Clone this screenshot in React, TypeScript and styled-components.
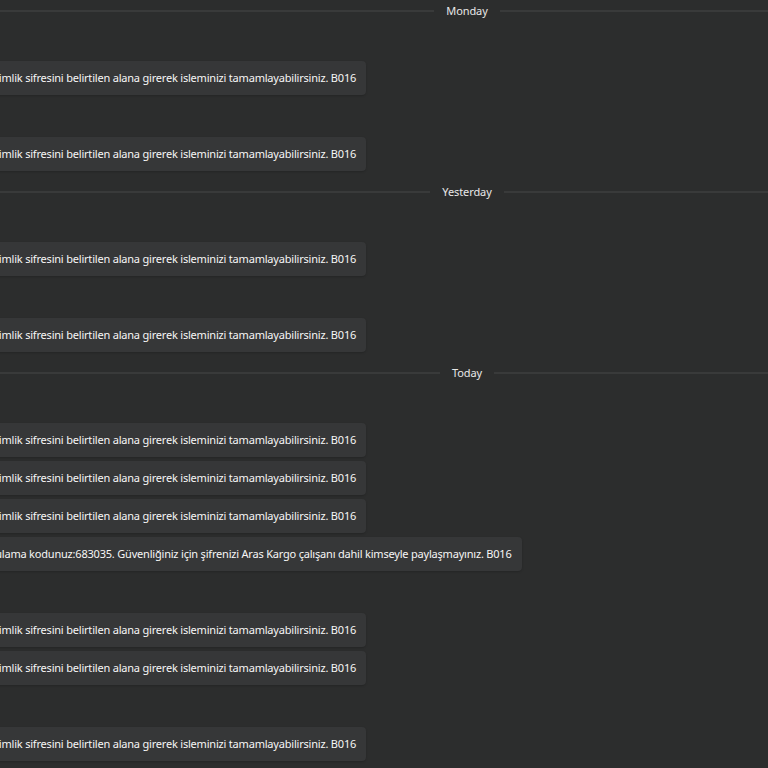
import React from "react";
import styled, { createGlobalStyle } from "styled-components";

const GlobalStyle = createGlobalStyle`
  html, body {
    margin: 0;
    padding: 0;
    background: #2c2d2d;
    overflow: hidden;
  }
  body {
    font-family: "Noto Sans", "Open Sans", sans-serif;
    -webkit-font-smoothing: antialiased;
  }
`;

const Page = styled.div`
  width: 768px;
  height: 768px;
  overflow: hidden;
  background: #2c2d2d;
`;

const Feed = styled.div`
  display: flex;
  flex-direction: column;
  margin-left: -300px;
  width: 1534px;
  padding-left: 226px;
  box-sizing: border-box;
`;

const DaySection = styled.section`
  display: flex;
  flex-direction: column;
  padding-bottom: 10px;
`;

const Divider = styled.div`
  display: flex;
  align-items: center;
  height: 22px;
  margin-left: -226px;
`;

const DividerLine = styled.div`
  flex: 1;
  height: 2px;
  background: #393a3a;
`;

const DividerLabel = styled.span`
  padding: 0 12px;
  font-size: 11px;
  letter-spacing: -0.1px;
  line-height: 22px;
  color: #e8e8e8;
`;

const GroupList = styled.div`
  display: flex;
  flex-direction: column;
  gap: 4px;
  margin-top: 1px;
`;

const Group = styled.div`
  display: flex;
  flex-direction: column;
  align-items: flex-start;
  gap: 4px;
`;

const GroupHeader = styled.div`
  height: 34px;
`;

const Bubble = styled.div`
  background: #363738;
  border-radius: 4px;
  padding: 9px 10px;
  height: 34px;
  box-sizing: border-box;
  font-size: 11px;
  line-height: 16px;
  letter-spacing: -0.2px;
  color: #f6f6f6;
  white-space: nowrap;
  box-shadow: 0 1px 2px rgba(0, 0, 0, 0.18);
`;

const SHORT =
  "Aras Kargo kimlik sifresini belirtilen alana girerek isleminizi tamamlayabilirsiniz. B016";
const LONG =
  "Kargo, doğrulama kodunuz:683035. Güvenliğiniz için şifrenizi Aras Kargo çalışanı dahil kimseyle paylaşmayınız. B016";

type GroupData = { id: string; messages: string[] };
type DayData = { label: string; groups: GroupData[] };

const days: DayData[] = [
  {
    label: "Monday",
    groups: [
      { id: "m1", messages: [SHORT] },
      { id: "m2", messages: [SHORT] },
    ],
  },
  {
    label: "Yesterday",
    groups: [
      { id: "y1", messages: [SHORT] },
      { id: "y2", messages: [SHORT] },
    ],
  },
  {
    label: "Today",
    groups: [
      { id: "t1", messages: [SHORT, SHORT, SHORT, LONG] },
      { id: "t2", messages: [SHORT, SHORT] },
      { id: "t3", messages: [SHORT] },
    ],
  },
];

export default function App() {
  return (
    <Page>
      <GlobalStyle />
      <Feed>
        {days.map((day) => (
          <DaySection key={day.label}>
            <Divider>
              <DividerLine />
              <DividerLabel>{day.label}</DividerLabel>
              <DividerLine />
            </Divider>
            <GroupList>
              {day.groups.map((g) => (
                <Group key={g.id}>
                  <GroupHeader />
                  {g.messages.map((m, mi) => (
                    <Bubble key={mi}>{m}</Bubble>
                  ))}
                </Group>
              ))}
            </GroupList>
          </DaySection>
        ))}
      </Feed>
    </Page>
  );
}
